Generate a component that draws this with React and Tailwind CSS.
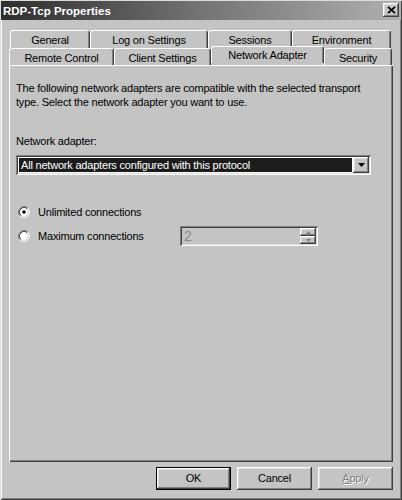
import React from "react";

const raised =
  "shadow-[inset_-1px_-1px_0_#404040,inset_1px_1px_0_#ffffff,inset_-2px_-2px_0_#808080,inset_2px_2px_0_#dcdcdc]";
const sunken =
  "shadow-[inset_1px_1px_0_#808080,inset_-1px_-1px_0_#ffffff,inset_2px_2px_0_#404040,inset_-2px_-2px_0_#dcdcdc]";
const tabBase =
  "h-full flex justify-center border-t border-l border-r border-t-white border-l-white border-r-[#404040] rounded-t-[3px] shadow-[inset_-1px_0_0_#808080] leading-[14px] whitespace-nowrap";

function Radio({ checked }) {
  return (
    <svg width="12" height="12" viewBox="0 0 12 12" className="shrink-0">
      <circle cx="6" cy="6" r="4.2" fill="#ffffff" />
      <path d="M2.11 9.89 A5.5 5.5 0 0 1 9.89 2.11" fill="none" stroke="#808080" strokeWidth="1" />
      <path d="M9.89 2.11 A5.5 5.5 0 0 1 2.11 9.89" fill="none" stroke="#ffffff" strokeWidth="1" />
      <path d="M2.82 9.18 A4.5 4.5 0 0 1 9.18 2.82" fill="none" stroke="#404040" strokeWidth="1" />
      <path d="M9.18 2.82 A4.5 4.5 0 0 1 2.82 9.18" fill="none" stroke="#dcdcdc" strokeWidth="1" />
      {checked && <circle cx="6" cy="6" r="1.8" fill="#000000" />}
    </svg>
  );
}

export default function App() {
  return (
    <div className="w-[402px] h-[500px] bg-[#c4c4c4] flex flex-col font-['Liberation_Sans',Arial,sans-serif] text-[11px] tracking-[-0.2px] text-black shadow-[inset_1px_1px_0_#dcdcdc,inset_-1px_-1px_0_#404040,inset_2px_2px_0_#ffffff,inset_-2px_-2px_0_#808080] overflow-hidden">
      {/* Title bar */}
      <div className="mx-[1px] mt-[1px] h-[19px] flex bg-linear-to-r from-[#2e2e2e] via-[#747474] to-[#b0b0b0]">
        <div className="pl-[2px] pt-[4px] leading-[13px] text-white font-bold text-[11.5px] tracking-normal">
          RDP-Tcp Properties
        </div>
        <div className={`ml-auto mr-[2px] mt-[2px] w-[16px] h-[14px] bg-[#c4c4c4] flex items-center justify-center ${raised}`}>
          <svg width="9" height="8" viewBox="0 0 9 8">
            <path d="M1 0.8 L8 7.2 M8 0.8 L1 7.2" stroke="#000" strokeWidth="1.7" />
          </svg>
        </div>
      </div>

      {/* Tab row 1 */}
      <div className="mt-[10px] ml-[10px] h-[18px] flex">
        <div className={`${tabBase} w-[80px] pt-[2px]`}>General</div>
        <div className={`${tabBase} w-[118px] pt-[2px]`}>Log on Settings</div>
        <div className={`${tabBase} w-[84px] pt-[2px]`}>Sessions</div>
        <div className={`${tabBase} w-[99px] pt-[2px]`}>Environment</div>
      </div>
      {/* Tab row 2 */}
      <div className="ml-[9px] h-[17px] flex">
        <div className={`${tabBase} w-[105px] pt-[2px]`}>Remote Control</div>
        <div className={`${tabBase} w-[97px] pt-[2px]`}>Client Settings</div>
        <div className={`${tabBase} relative z-10 -mt-[2px] h-[21px] w-[113px] pt-[1px] bg-[#c4c4c4]`}>
          Network Adapter
        </div>
        <div className={`${tabBase} w-[68px] pt-[2px]`}>Security</div>
      </div>

      {/* Panel */}
      <div className="ml-[9px] w-[384px] h-[397px] pl-[7px] pt-[16px] shadow-[inset_1px_1px_0_#ffffff,inset_-1px_-1px_0_#404040,inset_-2px_-2px_0_#808080] flex flex-col">
        <p className="leading-[14px]">
          The following network adapters are compatible with the selected transport
          <br />
          type. Select the network adapter you want to use.
        </p>
        <div className="mt-[25px] leading-[14px]">Network adapter:</div>
        <div className={`mt-[7px] w-[355px] h-[20px] bg-white flex items-stretch p-[2px] ${sunken}`}>
          <div className="flex-1 m-[1px] bg-[#1c1c1c] text-white leading-[14px] pl-[2px] flex items-center whitespace-nowrap overflow-hidden">
            All network adapters configured with this protocol
          </div>
          <div className={`w-[16px] bg-[#c4c4c4] flex items-center justify-center ${raised}`}>
            <svg width="7" height="4" viewBox="0 0 7 4">
              <path d="M0 0 H7 L3.5 4 Z" fill="#000" />
            </svg>
          </div>
        </div>

        <div className="mt-[30px] ml-[2px] h-[14px] flex items-center">
          <Radio checked />
          <span className="ml-[8px] leading-[14px]">Unlimited connections</span>
        </div>
        <div className="mt-[7px] ml-[2px] h-[20px] flex items-center">
          <Radio />
          <span className="ml-[8px] w-[142px] leading-[14px]">Maximum connections</span>
          <div className={`w-[138px] h-[20px] bg-[#c4c4c4] flex items-stretch p-[2px] ${sunken}`}>
            <div className="flex-1 pl-[2px] text-[#8a8a8a] leading-[16px] flex items-center text-[14px] tracking-normal">2</div>
            <div className="w-[16px] flex flex-col">
              <div className={`flex-1 bg-[#c4c4c4] flex items-center justify-center ${raised}`}>
                <svg width="5" height="3" viewBox="0 0 5 3">
                  <path d="M0 3 H5 L2.5 0 Z" fill="#808080" />
                </svg>
              </div>
              <div className={`flex-1 bg-[#c4c4c4] flex items-center justify-center ${raised}`}>
                <svg width="5" height="3" viewBox="0 0 5 3">
                  <path d="M0 0 H5 L2.5 3 Z" fill="#808080" />
                </svg>
              </div>
            </div>
          </div>
        </div>
      </div>

      {/* Buttons */}
      <div className="mt-[5px] mr-[9px] flex justify-end gap-[6px]">
        <div className="w-[75px] h-[23px] border border-black">
          <div className={`w-full h-full flex items-center justify-center bg-[#c4c4c4] ${raised}`}>OK</div>
        </div>
        <div className={`w-[75px] h-[23px] flex items-center justify-center bg-[#c4c4c4] ${raised}`}>Cancel</div>
        <div className={`w-[75px] h-[23px] flex items-center justify-center bg-[#c4c4c4] text-[#808080] [text-shadow:1px_1px_0_#ffffff] ${raised}`}>
          <span>
            <span className="underline underline-offset-[1px]">A</span>pply
          </span>
        </div>
      </div>
    </div>
  );
}
